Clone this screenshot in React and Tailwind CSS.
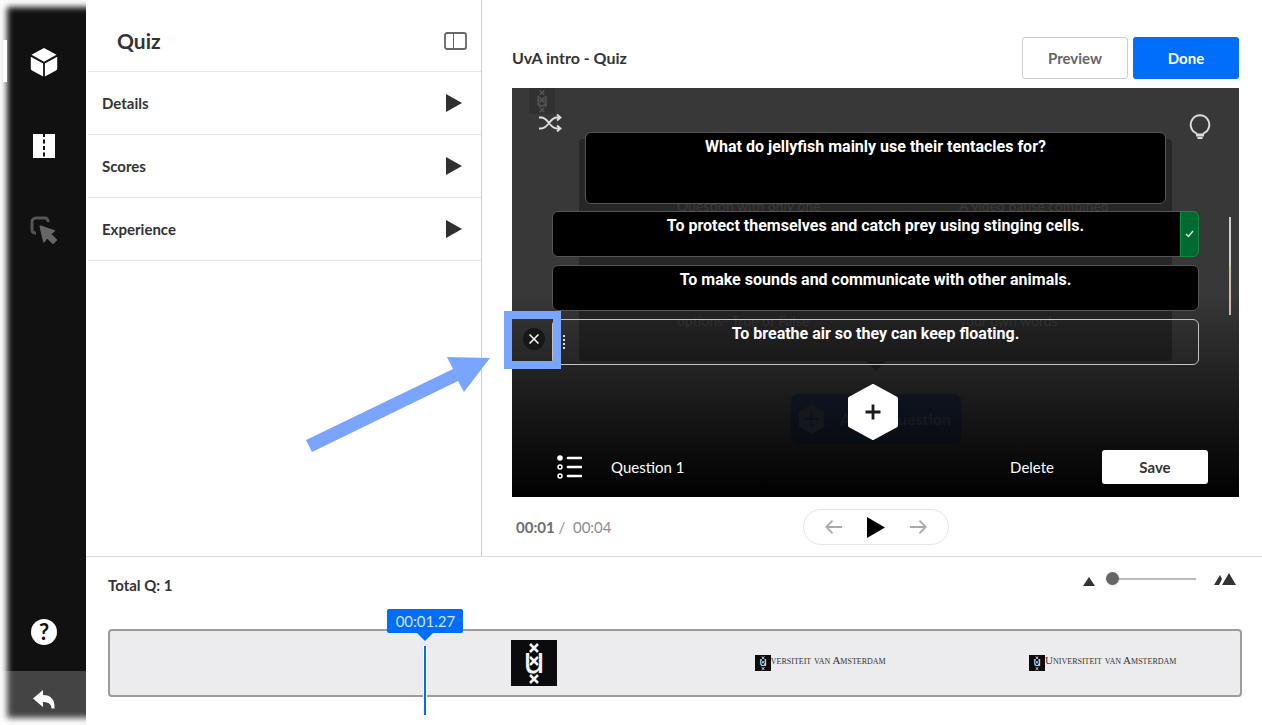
import React, { useState } from 'react';

const sections = ['Details', 'Scores', 'Experience'];

const crosses = 'M19 4l8 8M27 4l-8 8M19 17l8 8M27 17l-8 8M19 35l8 8M27 35l-8 8';

const UvaLogo = ({ className }) => (
  <svg viewBox="0 0 46 46" className={className} aria-hidden="true">
    <rect width="46" height="46" fill="#0b0b0d" />
    <text x="23" y="33" textAnchor="middle" fontSize="35" fontFamily="DejaVu Sans, sans-serif" fill="#f1f1f1">u</text>
    <path d={crosses} stroke="#0b0b0d" strokeWidth="4" fill="none" />
    <path d={crosses} stroke="#f1f1f1" strokeWidth="2.600" fill="none" />
  </svg>
);

const Sidebar = () => (
  <aside className="relative flex w-[86px] shrink-0 flex-col overflow-hidden bg-[#111]">
    <nav className="flex flex-1 flex-col pt-5 pl-[2px]">
      <button aria-label="Quiz" className="flex h-21 items-center justify-center">
        <svg width="28" height="30" viewBox="0 0 28 30" fill="#fff">
          <path d="M14 1l12.500 6.800L14 14.700 1.500 7.800z" />
          <path d="M.8 9.700l12.300 6.700v13L2 23.500a2 2 0 0 1-1.200-1.800z" />
          <path d="M27.200 9.700l-12.300 6.700v13L26 23.500a2 2 0 0 0 1.200-1.800z" />
        </svg>
      </button>
      <button aria-label="Trim" className="flex h-21 items-center justify-center">
        <svg width="22" height="24" viewBox="0 0 22 24">
          <rect width="22" height="24" fill="#fff" />
          <path d="M11 0v24" stroke="#111" strokeWidth="2" strokeDasharray="4 2.500" strokeDashoffset="1" />
        </svg>
      </button>
      <button aria-label="Hotspots" className="flex h-21 items-center justify-center">
        <svg width="28" height="28" viewBox="0 0 28 28">
          <path d="M18 6V5a3 3 0 0 0-3-3H6a4 4 0 0 0-4 4v8a3 3 0 0 0 3 3h1" fill="none" stroke="#555" strokeWidth="3" />
          <path d="M10.500 10.500l13.500 4.500-4 3 6 6-3 3-6-6-3 4.500z" fill="#666" stroke="#666" strokeWidth="2" strokeLinejoin="round" />
        </svg>
      </button>
    </nav>
    <button aria-label="Help" className="flex h-[78px] items-center justify-center pl-[2px]">
      <span className="flex size-[26px] items-center justify-center rounded-full bg-white text-[22px] leading-none font-bold text-[#111]">?</span>
    </button>
    <button aria-label="Back" className="flex h-[54px] items-center justify-center bg-[#444] pt-[2px] pl-[2px]">
      <svg width="22" height="19" viewBox="0 0 22 19" fill="#fff">
        <path d="M0 8.500L10 0v5c8 0 12 4.500 11.500 13.500h-3C18.500 14 15 12 10 12v5z" />
      </svg>
    </button>
    <div className="pointer-events-none absolute inset-y-0 left-0 -right-6 shadow-[inset_0_0_6px_7px_#fff]" />
    <div className="absolute top-10 left-[3px] h-[42px] w-1 bg-white" />
  </aside>
);

const Panel = () => (
  <section className="w-[396px] shrink-0 border-r border-[#ccc] pl-[2px]">
    <div className="flex h-18 items-center justify-between border-b border-[#e6e6e6] pt-3 pr-[14px] pb-[2px] pl-[29px]">
      <h1 className="text-[21px] leading-7 font-bold">Quiz</h1>
      <button aria-label="Toggle panel">
        <svg width="23" height="18" viewBox="0 0 23 18" fill="none" stroke="#666">
          <rect x="1" y="1" width="21" height="16" rx="2" strokeWidth="1.800" />
          <path d="M9.500 1v16" />
        </svg>
      </button>
    </div>
    {sections.map((name) => (
      <button key={name} className="flex h-[63px] w-full items-center justify-between border-b border-[#e6e6e6] pr-[19px] pl-[14px] text-[15px] font-bold">
        {name}
        <svg width="17" height="18" viewBox="0 0 17 18" fill="#2f2f31"><path d="M1 0l16 9-16 9z" /></svg>
      </button>
    ))}
  </section>
);

// dialog that shows faintly behind the question editor
const GhostDialog = () => (
  <div className="pointer-events-none absolute inset-0 text-[14px] leading-4 text-[#3a3a3a]" aria-hidden="true">
    <UvaLogo className="absolute top-0 left-[17px] h-[26px] w-[26px] opacity-15" />
    <div className="absolute top-[51px] right-[67px] left-[67px] h-[222px] rounded bg-black/30">
      <span className="absolute top-[59px] left-[98px]">Question with only one</span>
      <span className="absolute top-[59px] left-[380px]">A video pause combined</span>
      <span className="absolute top-[174px] left-[98px] text-[#303030]">options- True or False</span>
      <span className="absolute top-[174px] left-[380px] text-[#303030]">your own words</span>
    </div>
    <div className="absolute top-[273px] left-1/2 -translate-x-1/2 border-x-10 border-t-10 border-x-transparent border-t-black/30" />
    <div className="absolute top-[306px] left-1/2 flex h-[50px] w-[171px] -translate-x-1/2 items-center gap-4 rounded-lg bg-linear-to-b from-[#0e141f] to-[#080c12] px-2 text-[16px] font-bold text-[#17191f]">
      <svg width="26" height="30" viewBox="0 0 26 30" fill="#14171c">
        <path d="M13 0l13 7.500v15L13 30 0 22.500v-15z" />
        <path d="M13 8v14M6 15h14" stroke="#0b111b" strokeWidth="2" />
      </svg>
      <span className="whitespace-nowrap">Add a Question</span>
    </div>
  </div>
);

const field = 'block w-full resize-none overflow-hidden rounded-[6px] border px-6 py-1 text-center font-[Roboto,sans-serif] text-[16px] leading-5 font-bold text-white outline-none';

const Annotation = () => (
  <>
    <div className="pointer-events-none absolute -top-2 -left-12 h-[58px] w-[57px] border-8 border-[#7aa5ff]" />
    <svg className="pointer-events-none absolute top-[38px] -left-[246px]" width="184" height="96" viewBox="0 0 184 96" fill="#7aa5ff">
      <path d="M0 83L147 12 141 0l43 1-26 34-6-11L6 95z" />
    </svg>
  </>
);

const Editor = () => (
  <div className="relative flex flex-col bg-linear-to-b/srgb from-[#383838] from-50% to-black pb-[13px] text-white">
    <GhostDialog />
    <div className="relative flex items-start gap-[23px] pr-7 pl-[26px]">
      <button aria-label="Shuffle answers" className="mt-[26px] w-6">
        <svg width="24" height="18" viewBox="0 0 24 18" fill="none" stroke="#e0e0e0" strokeWidth="1.800">
          <path d="M1 3.500h2c8 0 8 11 16 11h3M1 14.500h2c8 0 8-11 16-11h3M19 .5l3.500 3-3.500 3M19 11.500l3.500 3-3.500 3" />
        </svg>
      </button>
      <textarea aria-label="Question" defaultValue="What do jellyfish mainly use their tentacles for?" className={`${field} mt-11 h-18 border-[#555] bg-black`} />
      <button aria-label="Hint" className="mt-[26px] flex w-6 justify-end">
        <svg width="22" height="26" viewBox="0 0 22 26" fill="none" stroke="#ddd" strokeWidth="1.900">
          <path d="M8 20.500l-1-1.500a9.300 9.300 0 1 1 8 0l-1 1.500z" />
          <path d="M7 21.500h8M8.500 24h5" />
        </svg>
      </button>
    </div>

    <div className="relative mt-[7px] flex flex-col gap-2 px-10">
      <div className="relative">
        <textarea aria-label="Answer 1" defaultValue="To protect themselves and catch prey using stinging cells." className={`${field} h-[46px] border-[#555] bg-black`} />
        <button aria-label="Correct answer" className="absolute inset-y-0 right-0 flex w-[19px] items-center justify-center rounded-r-[6px] border border-[#138a41] bg-[#006b2e]">
          <svg width="9" height="8" viewBox="0 0 9 8" fill="none" stroke="#ddd" strokeWidth="1.500"><path d="M1 4l2.500 2.500L8 1" /></svg>
        </button>
      </div>
      <textarea aria-label="Answer 2" defaultValue="To make sounds and communicate with other animals." className={`${field} h-[46px] border-[#555] bg-black`} />
      <div className="relative">
        <textarea aria-label="Answer 3" defaultValue="To breathe air so they can keep floating." className={`${field} h-[46px] border-[#c4c4c4] bg-transparent`} />
        <svg className="absolute top-4 left-[11px]" width="3" height="15" viewBox="0 0 3 15" fill="#ddd">
          <path d="M0 0h2v2H0zM0 4h2v2H0zM0 8h2v2H0zM0 12h2v2H0z" />
        </svg>
        <button aria-label="Remove answer" className="absolute top-[9px] -left-[29px] flex size-[22px] items-center justify-center rounded-full bg-[#171717]">
          <svg width="10" height="10" viewBox="0 0 10 10" stroke="#fff" strokeWidth="1.500"><path d="M.5.5l9 9M9.500.5l-9 9" /></svg>
        </button>
        <Annotation />
      </div>
    </div>
    <div className="absolute top-[129px] right-2 h-[98px] w-[2px] bg-linear-to-b from-[#ccc] from-50% via-[#c9c2a8] to-[#d5b3ad]" />

    <button aria-label="Add answer" className="relative mt-[19px] mr-[6px] self-center">
      <svg width="50" height="56" viewBox="0 0 50 56">
        <path d="M25 2l23 12.500v27L25 54 2 41.500v-27z" fill="#fff" stroke="#fff" strokeWidth="4" strokeLinejoin="round" />
        <path d="M25 20.500v15M17.500 28h15" stroke="#1b1b1b" strokeWidth="2.800" />
      </svg>
    </button>

    <div className="relative mt-[10px] flex h-[34px] items-center pr-[31px] pl-[45px]">
      <svg width="25" height="24" viewBox="0 0 25 24" fill="none" stroke="#fff">
        <circle cx="3" cy="3" r="2.800" fill="#fff" stroke="none" />
        <circle cx="3" cy="12" r="2" strokeWidth="1.500" />
        <circle cx="3" cy="21" r="2" strokeWidth="1.500" />
        <path d="M11 3h13M11 12h13M11 21h13" strokeWidth="2.600" strokeLinecap="round" />
      </svg>
      <span className="ml-[29px] text-[15px]">Question 1</span>
      <button className="mr-12 ml-auto text-[15px]">Delete</button>
      <button className="h-[34px] w-[106px] rounded-[3px] bg-white text-[15px] font-bold text-[#333]">Save</button>
    </div>
  </div>
);

const PlayerControls = () => (
  <div className="grid grid-cols-[1fr_auto_1fr] items-center pt-3 pb-[11px]">
    <p className="pl-1 text-[15px] whitespace-pre text-[#8e8e8e]"><b className="text-[#6d6d6d]">00:01</b> /  00:04</p>
    <div className="flex h-9 w-[146px] items-center justify-center gap-[25px] rounded-full border border-[#e6e6e6]">
      <button aria-label="Previous">
        <svg width="17" height="14" viewBox="0 0 17 14" fill="none" stroke="#aaa" strokeWidth="1.800"><path d="M17 7H1.500M7.500.7L1.300 7l6.200 6.300" /></svg>
      </button>
      <button aria-label="Play">
        <svg width="18" height="21" viewBox="0 0 18 21"><path d="M0 0l18 10.500L0 21z" /></svg>
      </button>
      <button aria-label="Next">
        <svg width="17" height="14" viewBox="0 0 17 14" fill="none" stroke="#aaa" strokeWidth="1.800"><path d="M0 7h15.500M9.500.7L15.700 7l-6.200 6.300" /></svg>
      </button>
    </div>
  </div>
);

const Frame = ({ label }) => (
  <div className="flex items-center justify-center pl-2">
    <UvaLogo className="size-4" />
    <span className="pb-[6px] font-['Liberation_Serif',serif] text-[11px] leading-4 whitespace-nowrap text-[#333] [font-variant:small-caps]">{label}</span>
  </div>
);

const Timeline = () => {
  const [zoom, setZoom] = useState(0);

  return (
    <section className="flex-1 border-t border-[#d9d9d9] pr-5 pl-[22px]">
      <div className="flex h-18 items-start justify-between pt-3 pr-[6px]">
        <h2 className="pt-[6px] text-[15px] leading-5 font-bold">Total Q: 1</h2>
        <div className="flex h-5 items-center">
          <svg className="mt-1" width="12" height="9" viewBox="0 0 12 9" fill="#333"><path d="M6 0l6 9H0z" /></svg>
          <input
            type="range"
            aria-label="Timeline zoom"
            value={zoom}
            onChange={(e) => setZoom(Number(e.target.value))}
            className="mr-[18px] ml-[11px] h-5 w-[90px] appearance-none bg-transparent [&::-webkit-slider-runnable-track]:h-[2px] [&::-webkit-slider-runnable-track]:bg-[#bbb] [&::-webkit-slider-thumb]:-mt-[6px] [&::-webkit-slider-thumb]:size-[13px] [&::-webkit-slider-thumb]:appearance-none [&::-webkit-slider-thumb]:rounded-full [&::-webkit-slider-thumb]:bg-[#666] [&::-webkit-slider-thumb]:shadow"
          />
          <svg width="22" height="12" viewBox="0 0 22 12" fill="#333"><path d="M15 0l7 12H8zM6 2l2 4-3 6H0z" /></svg>
        </div>
      </div>
      <div className="relative grid h-17 grid-cols-4 rounded-[4px] border-2 border-[#9c9c9c] bg-[#ecebed]">
        <div />
        <div className="flex items-center justify-center"><UvaLogo className="size-[46px]" /></div>
        <Frame label="versiteit van Amsterdam" />
        <Frame label="Universiteit van Amsterdam" />
        <div className="absolute -top-[22px] left-[28%] flex -translate-x-1/2 flex-col items-center pr-[2px]">
          <span className="flex h-6 w-[76px] items-center justify-center rounded-[2px] bg-[#006efa] text-[15px] text-white/80">00:01.27</span>
          <span className="border-x-8 border-t-8 border-x-transparent border-t-[#006efa]" />
          <span className="mt-[5px] h-[69px] w-1 border-x border-white bg-[#006efa]" />
        </div>
      </div>
    </section>
  );
};

const App = () => (
  <div className="flex min-h-screen overflow-hidden bg-white font-[Lato,sans-serif] text-[#333]">
    <Sidebar />
    <main className="relative flex min-w-0 flex-1 flex-col bg-white">
      <div className="flex">
        <Panel />
        <section className="min-w-0 flex-1 pr-[23px] pl-[30px]">
          <header className="flex items-center gap-[5px] pt-[37px] pb-[9px]">
            <h2 className="mr-auto text-[16px] font-bold">UvA intro - Quiz</h2>
            <button className="h-[42px] w-[106px] rounded-[3px] border border-[#ccc] text-[15px] font-bold text-[#666]">Preview</button>
            <button className="h-[42px] w-[106px] rounded-[3px] bg-[#006efa] text-[15px] font-bold text-white">Done</button>
          </header>
          <Editor />
          <PlayerControls />
        </section>
      </div>
      <Timeline />
    </main>
  </div>
);

export default App;
